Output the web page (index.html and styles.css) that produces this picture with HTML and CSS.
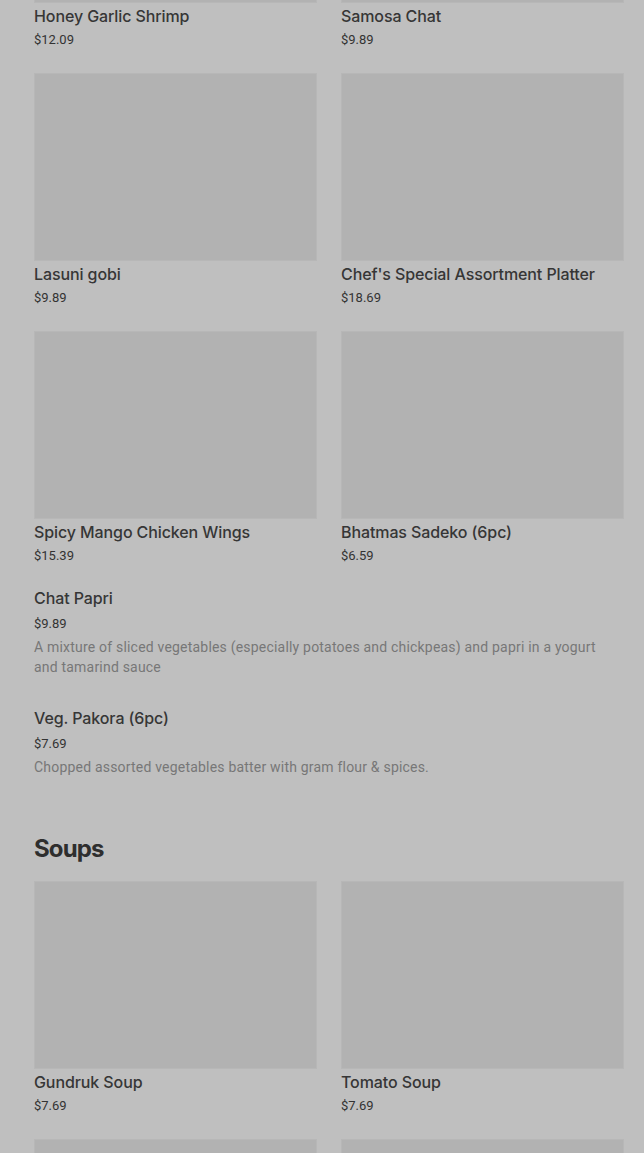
FILE: index.html
```html
<!DOCTYPE html>
<html lang="en">
<head>
<meta charset="utf-8">
<title>Menu</title>
<link rel="stylesheet" href="styles.css">
</head>
<body>
<main class="menu">
  <section class="section">
    <div class="grid">
      <div class="card"><div class="thumb"></div><div class="name">Honey Garlic Shrimp</div><div class="price">$12.09</div></div>
      <div class="card"><div class="thumb"></div><div class="name">Samosa Chat</div><div class="price">$9.89</div></div>
      <div class="card"><div class="thumb"></div><div class="name">Lasuni gobi</div><div class="price">$9.89</div></div>
      <div class="card"><div class="thumb"></div><div class="name">Chef's Special Assortment Platter</div><div class="price">$18.69</div></div>
      <div class="card"><div class="thumb"></div><div class="name">Spicy Mango Chicken Wings</div><div class="price">$15.39</div></div>
      <div class="card"><div class="thumb"></div><div class="name">Bhatmas Sadeko (6pc)</div><div class="price">$6.59</div></div>
    </div>
    <div class="list">
      <div class="item">
        <div class="name">Chat Papri</div>
        <div class="price">$9.89</div>
        <p class="desc">A mixture of sliced vegetables (especially potatoes and chickpeas) and papri in a yogurt and tamarind sauce</p>
      </div>
      <div class="item">
        <div class="name">Veg. Pakora (6pc)</div>
        <div class="price">$7.69</div>
        <p class="desc">Chopped assorted vegetables batter with gram flour &amp; spices.</p>
      </div>
    </div>
  </section>
  <section class="section">
    <h2 class="heading">Soups</h2>
    <div class="grid">
      <div class="card"><div class="thumb"></div><div class="name">Gundruk Soup</div><div class="price">$7.69</div></div>
      <div class="card"><div class="thumb"></div><div class="name">Tomato Soup</div><div class="price">$7.69</div></div>
      <div class="card"><div class="thumb"></div></div>
      <div class="card"><div class="thumb"></div></div>
    </div>
  </section>
</main>
</body>
</html>
```
FILE: styles.css
```css
html, body {
  margin: 0;
  padding: 0;
  background: #bfbfbf;
  overflow: hidden;
}
body {
  font-family: Roboto, "Liberation Sans", sans-serif;
  color: #333;
  width: 644px;
  height: 1153px;
}
.menu {
  margin-top: -185px;
  padding: 0 20px 0 34px;
}
.grid {
  display: grid;
  grid-template-columns: 283px 283px;
  column-gap: 24px;
  row-gap: 23px;
}
.card {
  display: flex;
  flex-direction: column;
}
.thumb {
  height: 188px;
  background: #b2b2b2;
  box-shadow: inset 0 0 0 1px #b7b7b7;
}
.name {
  margin-top: 1px;
  font-family: Inter, Roboto, sans-serif;
  font-size: 16px;
  line-height: 24px;
  font-weight: 500;
  color: #363636;
  letter-spacing: -0.1px;
}
.card .price {
  margin-top: 2px;
}
.price {
  font-size: 13px;
  line-height: 20px;
  color: #333;
}
.list {
  padding-top: 6px;
}
.item {
  padding: 14px 0 15px;
}
.item .name {
  margin-top: 0;
}
.item .price {
  margin-top: 4px;
}
.desc {
  margin: 3px 0 0;
  font-size: 14px;
  line-height: 20px;
  color: #777;
  letter-spacing: 0.2px;
  max-width: 575px;
}
.heading {
  margin: 41px 0 16px;
  font-family: Inter, Roboto, sans-serif;
  font-size: 24px;
  line-height: 32px;
  font-weight: 700;
  color: #2e2e2e;
  letter-spacing: -0.9px;
}
```
